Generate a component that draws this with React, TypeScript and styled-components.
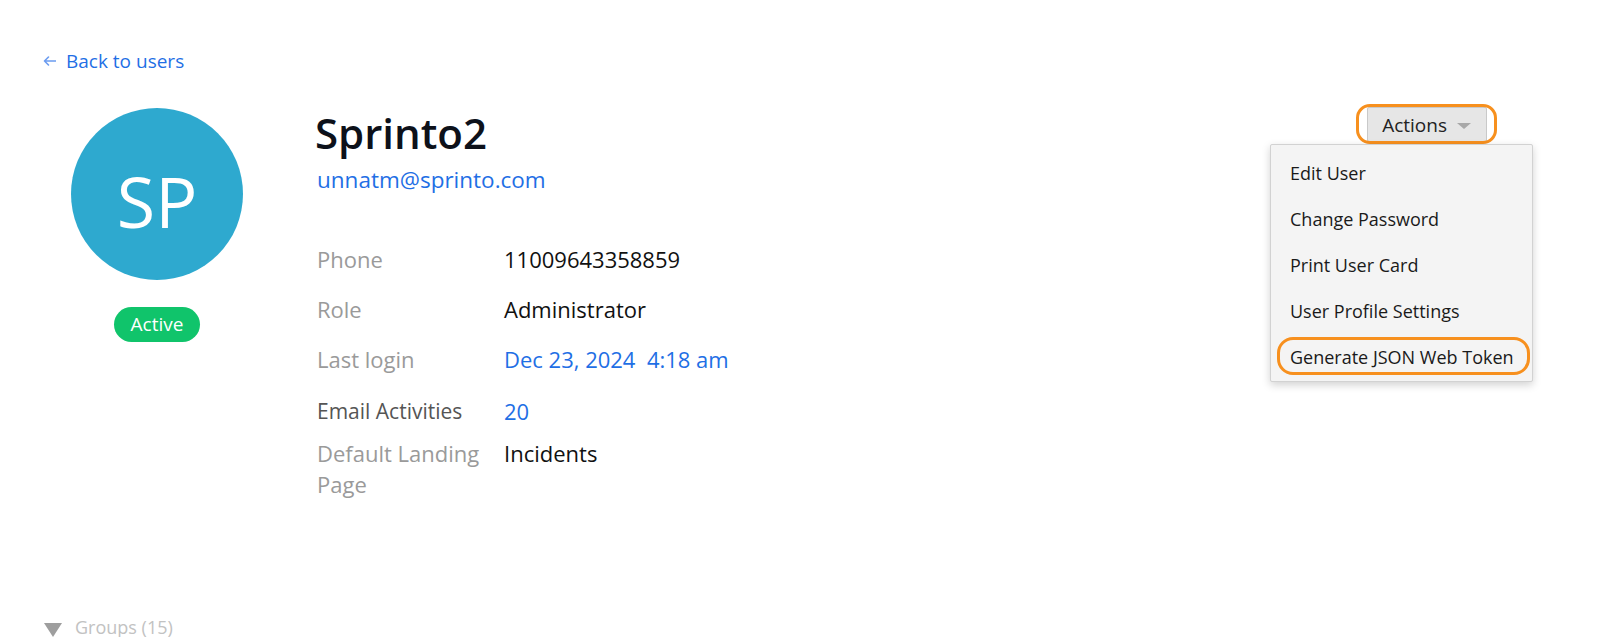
import React from 'react';
import styled, { createGlobalStyle } from 'styled-components';

const GlobalStyle = createGlobalStyle`
  html, body { margin: 0; padding: 0; background: #ffffff; }
  body { font-family: "Open Sans", "Noto Sans", sans-serif; }
  * { box-sizing: border-box; }
`;

const Page = styled.div`
  width: 1600px;
  height: 637px;
  overflow: hidden;
  padding: 48px 0 0 43px;
  display: flex;
  flex-direction: column;
`;

const BackLink = styled.a`
  align-self: flex-start;
  display: inline-flex;
  align-items: center;
  gap: 10px;
  font-size: 19px;
  line-height: 26px;
  color: #1f6fe5;
  text-decoration: none;
`;

const ProfileRow = styled.div`
  display: flex;
  align-items: flex-start;
  margin-top: 34px;
  padding-left: 28px;
`;

const AvatarColumn = styled.div`
  width: 172px;
  display: flex;
  flex-direction: column;
  align-items: center;
  gap: 27px;
`;

const Avatar = styled.div`
  width: 172px;
  height: 172px;
  border-radius: 50%;
  background: #2ea9cf;
  color: #ffffff;
  display: flex;
  align-items: center;
  justify-content: center;
  padding-top: 15px;
  font-size: 70px;
  line-height: 95px;
`;

const StatusBadge = styled.span`
  height: 35px;
  padding: 0 17px;
  border-radius: 18px;
  background: #10c46b;
  color: #ffffff;
  font-size: 19px;
  line-height: 35px;
`;

const InfoColumn = styled.div`
  margin-left: 72px;
  padding-top: 1px;
  display: flex;
  flex-direction: column;
`;

const Name = styled.h1`
  margin: 0;
  font-size: 42px;
  line-height: 48px;
  font-weight: 600;
  color: #0d111a;
`;

const EmailLink = styled.a`
  margin-top: 8px;
  margin-left: 2px;
  font-size: 22.5px;
  line-height: 30px;
  color: #1f6fe5;
  text-decoration: none;
`;

const Details = styled.div`
  margin-top: 49px;
  margin-left: 2px;
  display: flex;
  flex-direction: column;
`;

const DetailRow = styled.div<{ $gap: number }>`
  display: grid;
  grid-template-columns: 175px 1fr;
  column-gap: 12px;
  margin-bottom: ${(p) => p.$gap}px;
  font-size: 22px;
  line-height: 31px;
`;

const Label = styled.div<{ $strong?: boolean }>`
  color: ${(p) => (p.$strong ? '#555555' : '#9a9a9a')};
  font-size: ${(p) => (p.$strong ? '21px' : '22px')};
`;

const Value = styled.div<{ $link?: boolean }>`
  color: ${(p) => (p.$link ? '#1f6fe5' : '#111111')};
  white-space: pre;
`;

const ActionsArea = styled.div`
  margin-left: auto;
  margin-right: 113px;
  margin-top: -1px;
  position: relative;
`;

const ActionsButton = styled.button`
  position: relative;
  height: 35px;
  display: flex;
  align-items: center;
  gap: 10px;
  padding: 1px 15px 0 14px;
  background: #e6e6e6;
  border: 1px solid #c9c9c9;
  border-radius: 2px;
  font-family: inherit;
  font-size: 19px;
  color: #222222;
  &::after {
    content: '';
    position: absolute;
    top: -4px;
    left: -12px;
    right: -11px;
    bottom: -3px;
    border: 3px solid #f7901e;
    border-radius: 14px;
    pointer-events: none;
  }
`;

const Caret = styled.span`
  width: 0;
  height: 0;
  border-left: 7px solid transparent;
  border-right: 7px solid transparent;
  border-top: 6px solid #a8a8a8;
  margin-top: 2px;
`;

const Menu = styled.ul`
  position: absolute;
  top: 37px;
  right: -46px;
  width: 263px;
  margin: 0;
  padding: 5px 0 1px;
  list-style: none;
  background: #f4f4f4;
  border: 1px solid #d2d2d2;
  border-radius: 2px;
  box-shadow: 0 3px 8px rgba(0, 0, 0, 0.18);
`;

const MenuItem = styled.li<{ $highlight?: boolean }>`
  position: relative;
  padding: 0 19px;
  font-size: 18px;
  line-height: 46px;
  color: #1a1a1a;
  white-space: nowrap;
  &::after {
    content: '';
    display: ${(p) => (p.$highlight ? 'block' : 'none')};
    position: absolute;
    top: 3px;
    bottom: 5px;
    left: 6px;
    right: 2px;
    border: 3px solid #f7901e;
    border-radius: 16px;
    pointer-events: none;
  }
`;

const GroupsToggle = styled.div`
  margin-top: 115px;
  display: flex;
  align-items: center;
  gap: 13px;
  font-size: 18px;
  line-height: 24px;
  color: #c2c2c2;
`;

const Triangle = styled.span`
  width: 0;
  height: 0;
  margin-left: 1px;
  border-left: 9px solid transparent;
  border-right: 9px solid transparent;
  border-top: 14px solid #9e9e9e;
  margin-top: 6px;
`;

const details: { label: string; value: string; link?: boolean; strong?: boolean; gap: number }[] = [
  { label: 'Phone', value: '11009643358859', gap: 19 },
  { label: 'Role', value: 'Administrator', gap: 19 },
  { label: 'Last login', value: 'Dec 23, 2024  4:18 am', link: true, gap: 21 },
  { label: 'Email Activities', value: '20', link: true, strong: true, gap: 11 },
  { label: 'Default Landing Page', value: 'Incidents', gap: 0 },
];

const menuItems = ['Edit User', 'Change Password', 'Print User Card', 'User Profile Settings', 'Generate JSON Web Token'];

export default function App() {
  return (
    <>
      <GlobalStyle />
      <Page>
        <BackLink href="#">
          <svg width="13" height="10" viewBox="0 0 13 10" fill="none">
            <path d="M12.5 5H1.5M5.5 1L1.5 5L5.5 9" stroke="#6b9cf0" strokeWidth="1.6" strokeLinecap="round" strokeLinejoin="round" />
          </svg>
          Back to users
        </BackLink>
        <ProfileRow>
          <AvatarColumn>
            <Avatar>SP</Avatar>
            <StatusBadge>Active</StatusBadge>
          </AvatarColumn>
          <InfoColumn>
            <Name>Sprinto2</Name>
            <EmailLink href="#">unnatm@sprinto.com</EmailLink>
            <Details>
              {details.map((d) => (
                <DetailRow key={d.label} $gap={d.gap}>
                  <Label $strong={d.strong}>{d.label}</Label>
                  <Value $link={d.link}>{d.value}</Value>
                </DetailRow>
              ))}
            </Details>
          </InfoColumn>
          <ActionsArea>
            <ActionsButton>
              Actions
              <Caret />
            </ActionsButton>
            <Menu>
              {menuItems.map((m) => (
                <MenuItem key={m} $highlight={m === 'Generate JSON Web Token'}>
                  {m}
                </MenuItem>
              ))}
            </Menu>
          </ActionsArea>
        </ProfileRow>
        <GroupsToggle>
          <Triangle />
          Groups (15)
        </GroupsToggle>
      </Page>
    </>
  );
}
